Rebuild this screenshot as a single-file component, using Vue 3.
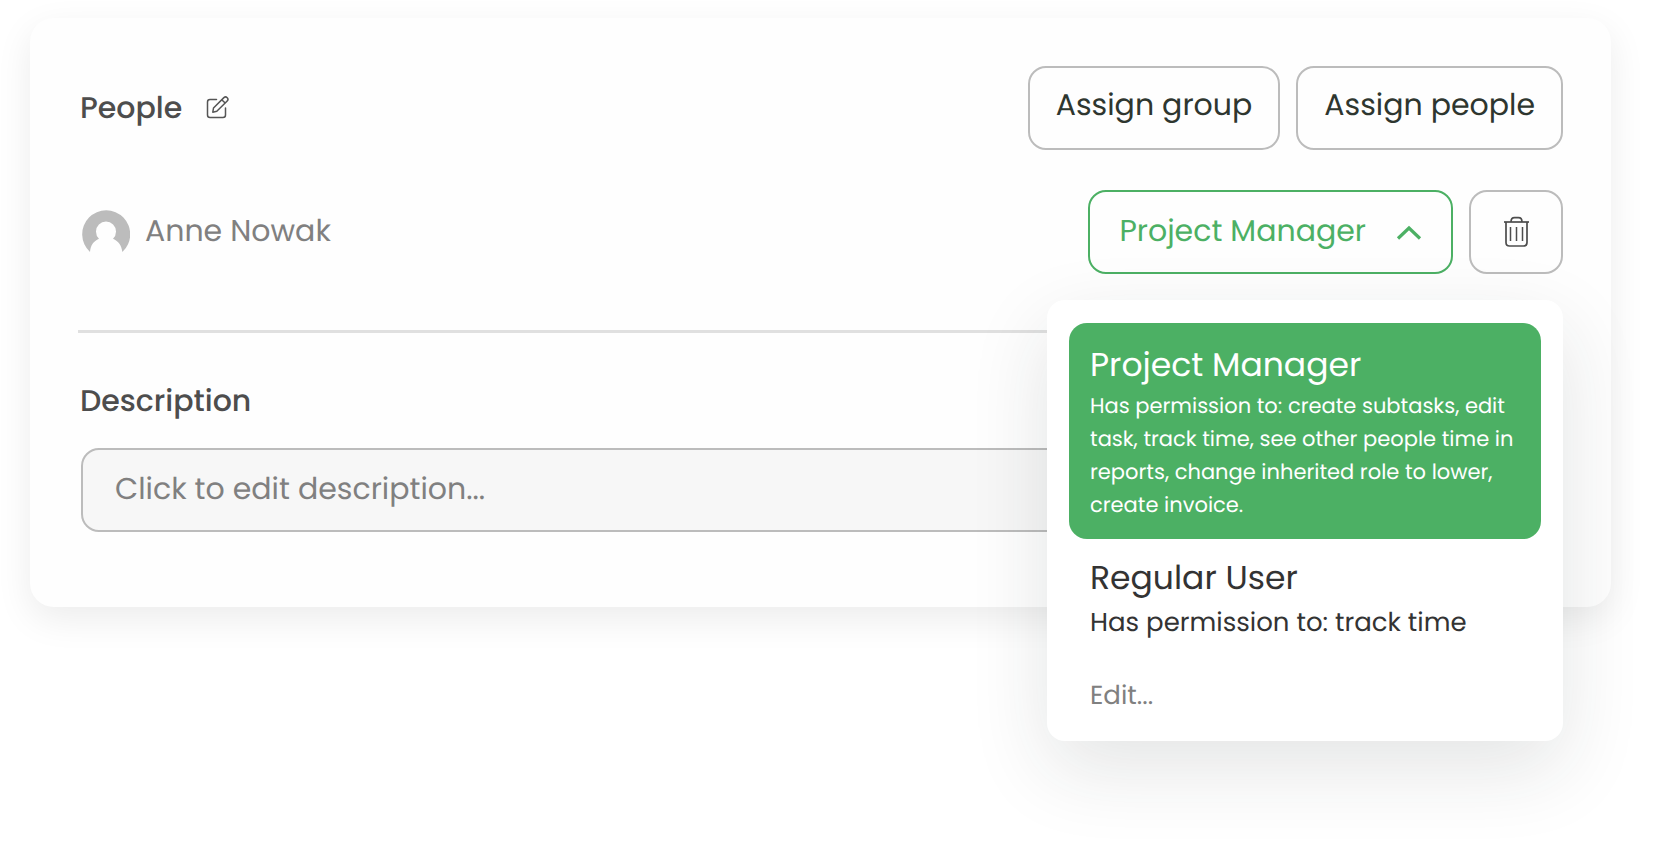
<template>
  <main class="page">
    <section class="card">
      <header class="row">
        <div class="heading">
          <h2 class="title">People</h2>
          <button class="icon-btn" type="button" aria-label="Edit people">
            <svg width="24" height="24" viewBox="0 0 24 24" fill="none" stroke="#555" stroke-width="1.5">
              <path d="M10.500 3.500H4Q1.500 3.500 1.500 6V19Q1.500 21.500 4 21.500H17Q19.500 21.500 19.500 19V12" stroke-linecap="round" />
              <path d="M7.500 12L17.900 1.600Q19.600.100 21.200 1.700Q22.800 3.400 21.200 5L10.800 15.300L6.800 16.200Z" stroke-linejoin="round" />
              <path d="M15.800 3.700L19.100 7" />
            </svg>
          </button>
        </div>
        <div class="actions">
          <button class="btn btn-assign" type="button">Assign group</button>
          <button class="btn btn-assign" type="button">Assign people</button>
        </div>
      </header>

      <div class="row">
        <div class="person">
          <svg width="48" height="52" viewBox="0 -4 48 52">
            <path
              fill="#bcbcbc"
              d="M8 43A24 24 0 1 1 40.400 43C39.500 36.500 36.500 32 31 29.700A10 10 0 1 0 17 29.700C11.500 32 8.500 36.500 8 43Z"
            />
          </svg>
          <span>Anne Nowak</span>
        </div>
        <div class="actions">
          <button
            class="btn btn-role"
            type="button"
            aria-haspopup="menu"
            :aria-expanded="isOpen"
            @click="isOpen = !isOpen"
          >
            <span>{{ selected }}</span>
            <svg :class="{ flipped: !isOpen }" width="26" height="18" viewBox="0 0 26 18" fill="none">
              <path d="M2 16.500L13 6L24 16.500" stroke="#4cb064" stroke-width="3.200" />
            </svg>
          </button>
          <button class="btn btn-trash" type="button" aria-label="Remove person">
            <svg width="26" height="32" viewBox="0 0 26 32" fill="none" stroke="#4d4d4d" stroke-width="1.700">
              <path d="M1 6H26" />
              <path d="M8 6C8 3 9 1.700 11.500 1.700H15.500C18 1.700 19 3 19 6" />
              <path d="M3 6V26.500Q3 30 6.500 30H20.500Q24 30 24 26.500V6" />
              <path d="M7.500 11V25M13.500 11V25M19.500 11V25" stroke-width="1.500" />
            </svg>
          </button>
          <div v-show="isOpen" class="menu" role="menu">
            <button
              v-for="role in roles"
              :key="role.name"
              type="button"
              role="menuitem"
              :class="['option', { 'option-active': role.name === selected }]"
              @click="selected = role.name"
            >
              <span class="option-name">{{ role.name }}</span>
              <span class="option-info">{{ role.info }}</span>
            </button>
            <button class="menu-edit" type="button" role="menuitem">Edit...</button>
          </div>
        </div>
      </div>

      <hr class="divider" />

      <div class="field">
        <label class="title" for="description">Description</label>
        <input id="description" v-model="description" type="text" placeholder="Click to edit description..." />
      </div>
    </section>
  </main>
</template>

<script setup>
import { ref } from 'vue'
const isOpen = ref(true)
const selected = ref('Project Manager')
const description = ref('')
const roles = [
  {
    name: 'Project Manager',
    info: 'Has permission to: create subtasks, edit task, track time, see other people time in reports, change inherited role to lower, create invoice.'
  },
  {
    name: 'Regular User',
    info: 'Has permission to: track time'
  }
]
</script>

<style>
body {
  margin: 0;
  background: #fff;
}
</style>

<style scoped>
.page {
  box-sizing: border-box;
  min-height: 100vh;
  padding: 18px 48px 48px 30px;
  font-family: Poppins, Inter, 'Open Sans', sans-serif;
  font-size: 30px;
  line-height: 40px;
  color: #808080;
  text-rendering: geometricPrecision;
}
.page button,
.page input {
  box-sizing: border-box;
  font-family: inherit;
  text-rendering: inherit;
}
.page svg {
  display: block;
  flex: none;
}
.card {
  padding: 48px 48px 75px;
  border-radius: 24px;
  background: #fefefe;
  box-shadow: 0 12px 36px rgba(0, 0, 0, 0.08);
}
.row {
  display: flex;
  align-items: center;
  justify-content: space-between;
  margin-bottom: 40px;
}
.heading {
  display: flex;
  align-items: center;
  gap: 24px;
}
.title {
  margin: 0;
  padding-left: 2px;
  font-size: 30px;
  font-weight: 500;
  color: #4d4d4d;
}
.icon-btn {
  padding: 0;
  border: 0;
  background: none;
  cursor: pointer;
}
.actions {
  position: relative;
  display: flex;
  gap: 16px;
}
.btn {
  height: 84px;
  border: 2px solid #bcbcbc;
  border-radius: 18px;
  background: none;
  font-size: 30px;
  line-height: 40px;
  cursor: pointer;
}
.btn-assign {
  padding: 0 26px 6px;
  color: #2e362f;
}
.btn-role {
  display: flex;
  align-items: center;
  gap: 30px;
  padding: 0 29px 2px;
  border-color: #4cb064;
  color: #4cb064;
}
.btn-trash {
  padding: 0 32px;
}
.flipped {
  transform: rotate(180deg);
}
.person {
  display: flex;
  align-items: center;
  gap: 15px;
  padding: 0 0 2px 4px;
}
.menu {
  position: absolute;
  top: calc(100% + 26px);
  right: 0;
  z-index: 10;
  box-sizing: border-box;
  width: 516px;
  padding: 23px 22px;
  border-radius: 18px;
  background: #fff;
  box-shadow: 0 28px 80px rgba(30, 40, 40, 0.12);
}
.option {
  display: flex;
  flex-direction: column;
  gap: 3px;
  width: 100%;
  padding: 17px 21px;
  border: 0;
  border-radius: 18px;
  background: none;
  color: #333;
  text-align: left;
  cursor: pointer;
}
.option-name {
  font-size: 33px;
  line-height: 44px;
}
.option-info {
  font-size: 26px;
  line-height: 40px;
}
.option-active {
  padding-top: 20px;
  background: #4cb064;
  color: #fff;
}
.option-active .option-info {
  font-size: 21px;
  line-height: 33px;
}
.menu-edit {
  padding: 14px 21px 0;
  border: 0;
  background: none;
  font-size: 26px;
  line-height: 44px;
  color: #808080;
  cursor: pointer;
}
.divider {
  height: 3px;
  margin: 56px 0 48px;
  border: 0;
  background: #e0e0e0;
}
.field {
  display: flex;
  flex-direction: column;
  gap: 27px;
}
.field input {
  height: 84px;
  margin-left: 3px;
  padding: 0 32px 2px;
  border: 2px solid #bcbcbc;
  border-radius: 18px;
  background: #f7f7f7;
  font-size: 30px;
  color: #4d4d4d;
}
.field input::placeholder {
  color: #808080;
  opacity: 1;
}
</style>
